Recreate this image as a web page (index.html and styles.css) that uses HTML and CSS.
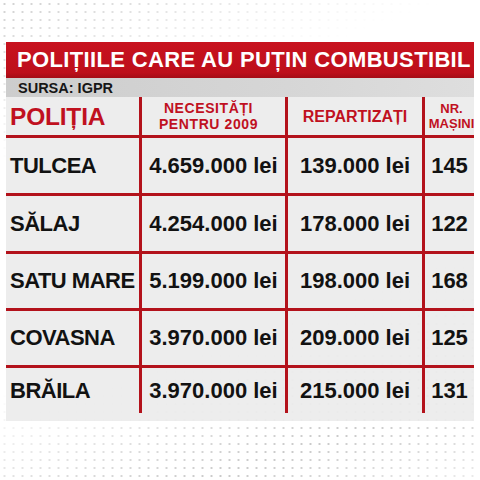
FILE: index.html
```html
<!DOCTYPE html>
<html lang="ro">
<head>
    <meta charset="UTF-8">
    <meta name="viewport" content="width=device-width, initial-scale=1.0">
    <title>Polițiile care au puțin combustibil</title>
    <link rel="stylesheet" href="styles.css">
</head>
<body>
    <div class="board">
        <div class="title">POLIȚIILE CARE AU PUȚIN COMBUSTIBIL</div>
        <div class="source">SURSA: IGPR</div>

        <div class="grid">
            <div class="row head">
                <div class="cell name">POLIȚIA</div>
                <div class="cell small">NECESITĂȚI<br>PENTRU 2009</div>
                <div class="cell mid">REPARTIZAȚI</div>
                <div class="cell tiny">NR.<br>MAȘINI</div>
            </div>
            <div class="row r58">
                <div class="cell name">TULCEA</div>
                <div class="cell">4.659.000 lei</div>
                <div class="cell">139.000 lei</div>
                <div class="cell">145</div>
            </div>
            <div class="row r58">
                <div class="cell name">SĂLAJ</div>
                <div class="cell">4.254.000 lei</div>
                <div class="cell">178.000 lei</div>
                <div class="cell">122</div>
            </div>
            <div class="row r57">
                <div class="cell name">SATU MARE</div>
                <div class="cell">5.199.000 lei</div>
                <div class="cell">198.000 lei</div>
                <div class="cell">168</div>
            </div>
            <div class="row r57">
                <div class="cell name">COVASNA</div>
                <div class="cell">3.970.000 lei</div>
                <div class="cell">209.000 lei</div>
                <div class="cell">125</div>
            </div>
            <div class="row last">
                <div class="cell name">BRĂILA</div>
                <div class="cell">3.970.000 lei</div>
                <div class="cell">215.000 lei</div>
                <div class="cell">131</div>
            </div>
        </div>
    </div>
</body>
</html>
```

FILE: styles.css
```css
body {
    margin: 0;
    height: 480px;
    overflow: hidden;
    font-family: "Liberation Sans", Arial, sans-serif;
    font-weight: bold;
    color: #121212;
    background:
        linear-gradient(160deg, rgba(255,255,255,0.3) 0%, rgba(255,255,255,1) 25%, rgba(255,255,255,1) 60%, rgba(255,255,255,0.2) 85%, rgba(255,255,255,0.7) 100%),
        radial-gradient(circle, #bdbdbd 0.8px, transparent 1.4px) 0 0 / 9px 8px,
        #fff;
}
.board { width: 468px; margin: 42px 0 0 6px; background-color: rgba(236, 236, 236, 0.92); padding-bottom: 8px; }
.title {
    height: 36px;
    display: flex;
    align-items: center;
    padding-left: 11px;
    background: linear-gradient(to bottom, #c8121f 0%, #bd0f1b 85%, #a50c16 100%);
    color: #fff;
    font-size: 22px;
    letter-spacing: 0.35px;
    white-space: nowrap;
}
.source {
    height: 19px;
    display: flex;
    align-items: center;
    padding-left: 12px;
    background: linear-gradient(to right, #cdcdcd 0%, #d6d6d6 60%, #dedede 100%);
    font-size: 14.5px;
    color: #161616;
}
.row { display: grid; grid-template-columns: 136px 146px 137px 49px; border-bottom: 3px solid #b3121b; box-sizing: border-box; }
.head { height: 41px; }
.r58 { height: 58px; }
.r57 { height: 57px; }
.last { height: 45px; border-bottom: none; }
.cell {
    display: flex;
    align-items: center;
    justify-content: center;
    border-right: 3px solid #b3121b;
    font-size: 22px;
    white-space: nowrap;
    text-align: center;
}
.cell:last-child { border-right: none; }
.cell.name { justify-content: flex-start; padding-left: 4px; letter-spacing: -0.5px; }
.head .cell { color: #c0111f; }
.head .cell.name { font-size: 24.5px; letter-spacing: -0.2px; padding-top: 2px; }
.head .small { font-size: 14px; line-height: 16px; letter-spacing: 0.6px; padding-right: 10px; }
.head .mid { font-size: 16px; padding-top: 2px; }
.head .tiny { font-size: 13px; line-height: 15px; padding-left: 4px; }
```
